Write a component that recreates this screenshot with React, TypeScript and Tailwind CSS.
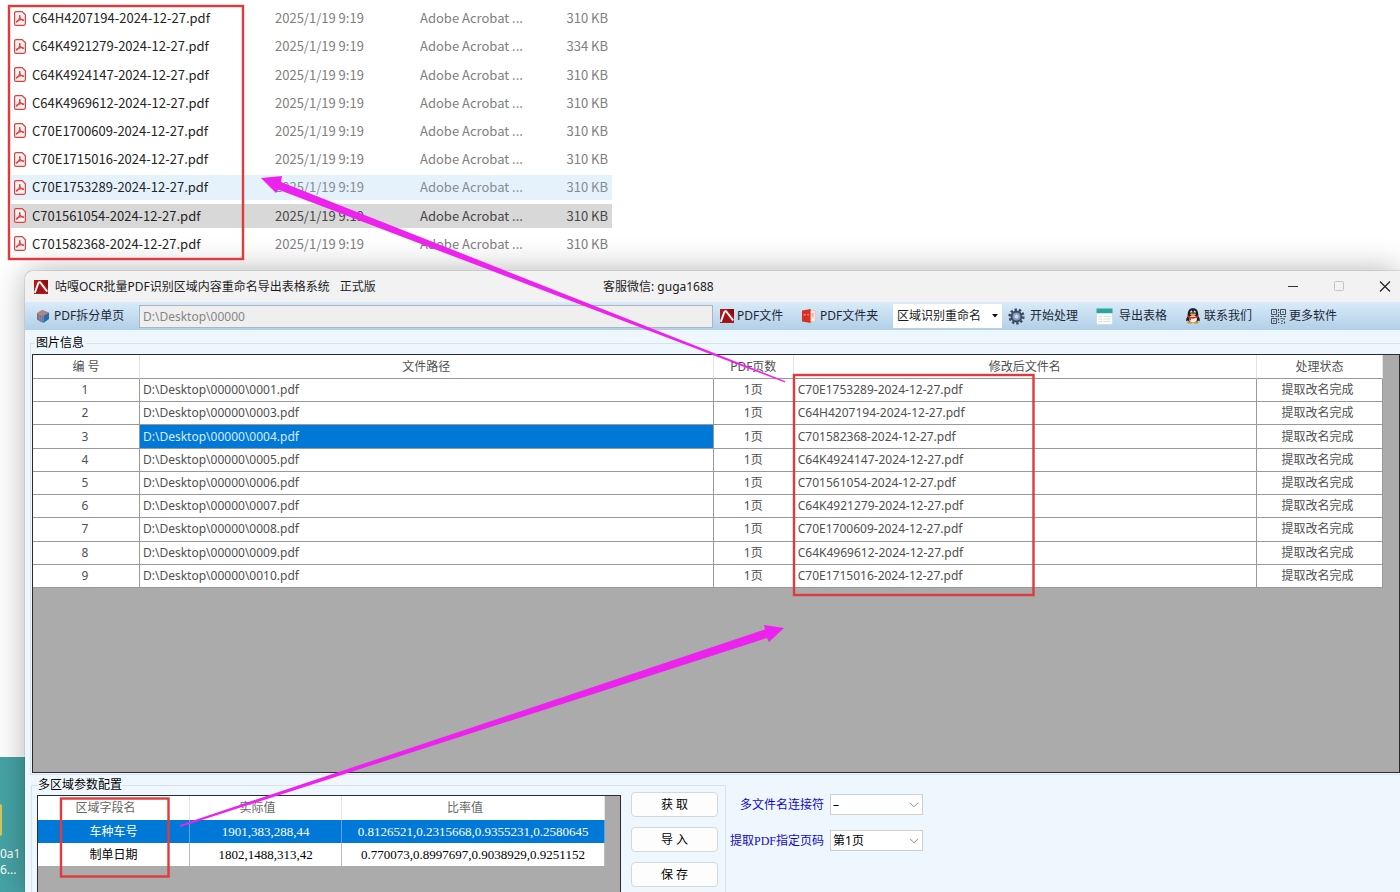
import type { ReactNode } from "react"

const files = [
    { name: "C64H4207194-2024-12-27.pdf", size: "310 KB" },
    { name: "C64K4921279-2024-12-27.pdf", size: "334 KB" },
    { name: "C64K4924147-2024-12-27.pdf", size: "310 KB" },
    { name: "C64K4969612-2024-12-27.pdf", size: "310 KB" },
    { name: "C70E1700609-2024-12-27.pdf", size: "310 KB" },
    { name: "C70E1715016-2024-12-27.pdf", size: "310 KB" },
    { name: "C70E1753289-2024-12-27.pdf", size: "310 KB", state: "hover" },
    { name: "C701561054-2024-12-27.pdf", size: "310 KB", state: "selected" },
    { name: "C701582368-2024-12-27.pdf", size: "310 KB" },
]

const results = [
    { path: "0001.pdf", renamed: "C70E1753289-2024-12-27.pdf" },
    { path: "0003.pdf", renamed: "C64H4207194-2024-12-27.pdf" },
    { path: "0004.pdf", renamed: "C701582368-2024-12-27.pdf", selected: true },
    { path: "0005.pdf", renamed: "C64K4924147-2024-12-27.pdf" },
    { path: "0006.pdf", renamed: "C701561054-2024-12-27.pdf" },
    { path: "0007.pdf", renamed: "C64K4921279-2024-12-27.pdf" },
    { path: "0008.pdf", renamed: "C70E1700609-2024-12-27.pdf" },
    { path: "0009.pdf", renamed: "C64K4969612-2024-12-27.pdf" },
    { path: "0010.pdf", renamed: "C70E1715016-2024-12-27.pdf" },
]

const regions = [
    { field: "车种车号", actual: "1901,383,288,44", ratio: "0.8126521,0.2315668,0.9355231,0.2580645", selected: true },
    { field: "制单日期", actual: "1802,1488,313,42", ratio: "0.770073,0.8997697,0.9038929,0.9251152" },
]

const PdfFileIcon = () => (
    <svg viewBox="0 0 12 15" className="h-[15px] w-3 shrink-0" fill="none" stroke="#dc4040">
        <path d="M2 .6h6.2l3.2 3.2v9a1.6 1.6 0 0 1-1.6 1.6H2A1.5 1.5 0 0 1 .6 12.9V2A1.4 1.4 0 0 1 2 .6Z" fill="#fdf3f3" strokeWidth="1.2" />
        <path d="M5.8 4.6c-1 0 .1 2.600 1.800 4.100 1.200 1 2.300.9 2 .3-.4-.8-4.200-.4-6.200.8-1.500.9-1.100 1.800-.2 1C4.700 9.700 6.800 4.700 5.800 4.600Z" strokeWidth="1.100" />
    </svg>
)

const AdobeIcon = () => (
    <svg viewBox="0 0 14 14" className="size-[14px] shrink-0">
        <path d="M0 0h14v14H0Z" fill="#b5161b" />
        <path d="M7 0h7v8Z" fill="#8c0c10" />
        <path d="M1.500 13 5.200 4.500 11.500 13Z" fill="#a01216" />
        <path d="M.8 12.800 4.300 3.200C4.700 2 6.200 2 6.700 3l6.500 8.500" fill="none" stroke="#fff" strokeWidth="1.900" />
    </svg>
)

const CubeIcon = () => (
    <svg viewBox="0 0 14 14" className="size-[14px] shrink-0">
        <path d="m1 4 5-3 7 2.500-5.500 3Z" fill="#c9786e" />
        <path d="m1 4 2.200.9V12L1 10.500Z" fill="#6b7686" />
        <path d="m3.200 4.900 2 .8v7.600L3.200 12Z" fill="#b5645c" />
        <path d="m5.200 5.700 2.300.8V14l-2.300-.9Z" fill="#4a86b8" />
        <path d="m7.500 6.500 5.500-3V10l-5.500 4Z" fill="#2c6ba5" />
        <path d="m3 3.800 5-2.300M5 4.700l5-2.300" stroke="#7a93ab" strokeWidth=".8" />
    </svg>
)

const FolderIcon = () => (
    <svg viewBox="0 0 14 14" className="size-[14px] shrink-0">
        <path d="M7 1.500h6.300v11H7Z" fill="#fbeeec" stroke="#e5b5af" strokeWidth=".6" />
        <path d="M9.800 4h1.500v3.500H9.800ZM9 9h3" fill="#e4b0aa" stroke="#e4b0aa" strokeWidth=".6" />
        <path d="M0 1.500 8.600 0v14L0 12.500Z" fill="#d9301f" />
        <path d="M1.500 5.800h2.500M5 5.800h2" stroke="#f3a79f" />
    </svg>
)

const GearIcon = () => (
    <svg viewBox="0 0 18 18" className="size-[17px] shrink-0">
        <circle cx="9" cy="9" r="7.200" fill="none" stroke="#3c4a60" strokeWidth="2.800" strokeDasharray="2.500 2.020" />
        <circle cx="9" cy="9" r="5.300" fill="#7f96b6" stroke="#3c4a60" strokeWidth="2" />
        <circle cx="9" cy="9" r="2.600" fill="#c8dcf0" stroke="#8ea6c4" />
    </svg>
)

const SheetIcon = () => (
    <svg viewBox="0 0 17 17" className="size-[17px] shrink-0">
        <path d="M.5.500h16v16H.5Z" fill="#fbfdfd" stroke="#c5d5dc" strokeWidth=".6" />
        <path d="M.5.500h16v4.800H.5Z" fill="#2aa79c" />
        <path d="M2.500 8.500h3.500M7.500 8.500h7M2.500 11h3.500M7.500 11h7M2.500 13.500h3.500M7.500 13.500h7" stroke="#c9d8e4" strokeWidth=".8" />
    </svg>
)

const PenguinIcon = () => (
    <svg viewBox="0 0 14 16" className="h-4 w-[14px] shrink-0">
        <path d="M1.600 8.500C-.2 10.500 0 12.800.6 13.200c.5.200 1-.6 1.300-1 .8 2.200 2.700 2.800 5.100 2.800s4.300-.6 5.100-2.800c.3.400.8 1.200 1.300 1 .6-.4.8-2.700-1-4.700C12.500 3 11 .3 7 .3S1.500 3 1.600 8.500Z" fill="#1d1c22" />
        <ellipse cx="7" cy="11" rx="3.900" ry="3.700" fill="#fff" />
        <ellipse cx="5.400" cy="4" rx="1" ry="1.500" fill="#fff" />
        <ellipse cx="8.600" cy="4" rx="1" ry="1.500" fill="#fff" />
        <circle cx="5.700" cy="4.200" r=".5" />
        <circle cx="8.300" cy="4.200" r=".5" />
        <ellipse cx="7" cy="6.400" rx="3" ry="1" fill="#f2a11b" />
        <path d="M2 7.600c3 1.700 7 1.700 10 0l.3 1.700c-3 1.500-5.500 1.500-7.300 1.300v2l-1.800-.3v-2.100l-1.500-.9Z" fill="#d92b22" />
        <ellipse cx="3.800" cy="14.700" rx="2.600" ry="1.100" fill="#e8901a" />
        <ellipse cx="10.200" cy="14.700" rx="2.600" ry="1.100" fill="#e8901a" />
    </svg>
)

const QrIcon = () => (
    <svg viewBox="0 0 15 15" className="size-[15px] shrink-0" fill="none" stroke="#46505b">
        <path d="M.5.500h5v5h-5ZM9.500.500h5v5h-5ZM.5 9.500h5v5h-5Z" />
        <path d="M2 3h2M11 3h2M2 12h2M7.500 0v2M7 3.500h1.500M7.500 5v3M0 7.500h3M4.500 7.500h2M9 7.500h2M12.500 7.500H15M7.500 9.500v2M7 13.500h1.500M9.500 9.500h2M13 9v2M10 12h2M10 14.500h1.500M13.500 12.500v2" strokeWidth="1.200" />
    </svg>
)

const Chevron = () => (
    <svg viewBox="0 0 10 6" className="pointer-events-none absolute right-1 top-2 h-1.5 w-2.5" fill="none" stroke="#8a8a8a">
        <path d="m1 .8 4 4 4-4" />
    </svg>
)

const ToolButton = ({ icon, children, className }: { icon: ReactNode; children: ReactNode; className: string }) => (
    <button type="button" className={`flex shrink-0 items-center whitespace-nowrap text-[#1c2733] ${className}`}>
        {icon}
        {children}
    </button>
)

const FileList = () => (
    <section className="h-[271px] pl-[11px] pt-0.5 font-['Noto_Sans_CJK_SC',sans-serif] text-[13px] leading-5">
        <table className="h-[258px] w-[601px] table-fixed border-separate border-spacing-x-0 border-spacing-y-1">
            <colgroup>
                <col className="w-[264px]" />
                <col className="w-[145px]" />
                <col className="w-[112px]" />
                <col />
            </colgroup>
            <tbody>
                {files.map((file) => (
                    <tr
                        key={file.name}
                        className={
                            file.state === "hover"
                                ? "bg-[#e5f2fc] text-[#858c92]"
                                : file.state === "selected"
                                  ? "bg-[#d8d8d8] text-[#484848]"
                                  : "text-[#808080]"
                        }
                    >
                        <td className="p-0 text-[#242424]">
                            <span className="flex items-center gap-1.5 pl-[3px]">
                                <PdfFileIcon />
                                {file.name}
                            </span>
                        </td>
                        <td className="p-0">2025/1/19 9:19</td>
                        <td className="whitespace-nowrap p-0">Adobe Acrobat ...</td>
                        <td className="p-0 pr-1 text-right">{file.size}</td>
                    </tr>
                ))}
            </tbody>
        </table>
    </section>
)

const TitleBar = () => (
    <header className="flex h-[31px] shrink-0 items-center bg-[#f2f2f3] pl-[9px] text-[#1c1c1c]">
        <AdobeIcon />
        <h1 className="ml-[7px] flex w-[548px] gap-2.5 whitespace-nowrap">
            <span>咕嘎OCR批量PDF识别区域内容重命名导出表格系统</span>
            <span>正式版</span>
        </h1>
        <span className="flex-1">客服微信: guga1688</span>
        <div className="flex">
            <button type="button" aria-label="最小化" className="flex w-[46px] justify-center">
                <svg viewBox="0 0 12 12" className="size-3" stroke="#333">
                    <path d="M1 5.500h10" />
                </svg>
            </button>
            <button type="button" aria-label="最大化" className="flex w-[46px] justify-center">
                <svg viewBox="0 0 12 12" className="size-3" fill="none" stroke="#c4c4c4">
                    <rect x="1.500" y=".500" width="9" height="9" rx="1" />
                </svg>
            </button>
            <button type="button" aria-label="关闭" className="flex w-[38px] justify-center pl-2">
                <svg viewBox="0 0 12 12" className="size-3" stroke="#222" strokeWidth="1.200">
                    <path d="m1 .5 10 10M11 .5 1 10.500" />
                </svg>
            </button>
        </div>
    </header>
)

const Toolbar = () => (
    <div className="flex h-7 shrink-0 items-center bg-linear-to-b from-[#d9ebf9] to-[#b1cfe8] pl-[11px] pr-[63px]">
        <ToolButton icon={<CubeIcon />} className="w-[103px] gap-1">PDF拆分单页</ToolButton>
        <input
            aria-label="文件夹路径"
            defaultValue="D:\Desktop\00000"
            className="h-[23px] min-w-0 flex-1 border border-[#abb6c0] bg-[#efefef] px-[3px] text-[#858585]"
        />
        <ToolButton icon={<AdobeIcon />} className="ml-[7px] w-[82px] gap-[3px]">PDF文件</ToolButton>
        <ToolButton icon={<FolderIcon />} className="w-[91px] gap-1">PDF文件夹</ToolButton>
        <div className="relative mr-1.5 w-[109px]">
            <select aria-label="处理方式" className="h-6 w-full appearance-none bg-white pl-1 text-[#1c1c1c]">
                <option>区域识别重命名</option>
            </select>
            <svg viewBox="0 0 6 4" className="pointer-events-none absolute right-1 top-2.5 h-1 w-1.5">
                <path d="M0 0h6L3 3.500Z" fill="#111" />
            </svg>
        </div>
        <ToolButton icon={<GearIcon />} className="w-[88px] gap-[5px]">开始处理</ToolButton>
        <ToolButton icon={<SheetIcon />} className="w-[90px] gap-1.5">导出表格</ToolButton>
        <ToolButton icon={<PenguinIcon />} className="w-[85px] gap-1">联系我们</ToolButton>
        <ToolButton icon={<QrIcon />} className="gap-[3px]">更多软件</ToolButton>
    </div>
)

const ResultGrid = () => (
    <div className="h-[419px] border border-[#2b2b2b] bg-[#ababab] pr-4">
        <table className="h-[233px] w-full table-fixed border-separate border-spacing-0 bg-white text-[#505050]">
            <colgroup>
                <col className="w-[107px]" />
                <col className="w-[42.5%]" />
                <col className="w-20" />
                <col />
                <col className="w-[126px]" />
            </colgroup>
            <thead>
                <tr className="h-6">
                    {["编 号", "文件路径", "PDF页数", "修改后文件名", "处理状态"].map((title) => (
                        <th key={title} className="border-b border-r border-b-[#999] border-r-[#e4e4e4] p-0 font-normal">
                            {title}
                        </th>
                    ))}
                </tr>
            </thead>
            <tbody>
                {results.map((row, i) => (
                    <tr key={row.path} className="h-[23px] *:border-b *:border-r *:border-[#999] *:p-0">
                        <td className="pr-0.5! text-center">{i + 1}</td>
                        <td className={row.selected ? "bg-[#0078d7] pl-[3px]! text-[#d8ecff]" : "pl-[3px]!"}>
                            {"D:\\Desktop\\00000\\" + row.path}
                        </td>
                        <td className="text-center">1页</td>
                        <td className="pl-1!">{row.renamed}</td>
                        <td className="pr-1! text-center">提取改名完成</td>
                    </tr>
                ))}
            </tbody>
        </table>
    </div>
)

const RegionGrid = () => (
    <div className="w-[584px] border border-b-0 border-[#2b2b2b] bg-[#ababab] pr-[15px]">
        <table className="w-full table-fixed border-separate border-spacing-0 bg-white font-['Liberation_Serif','Noto_Sans_CJK_SC',serif]">
            <colgroup>
                <col className="w-[152px]" />
                <col className="w-[152px]" />
                <col />
            </colgroup>
            <thead>
                <tr className="h-6">
                    {["区域字段名", "实际值", "比率值"].map((title) => (
                        <th key={title} className="border-r border-[#e4e4e4] p-0 pr-4 font-normal text-[#666]">
                            {title}
                        </th>
                    ))}
                </tr>
            </thead>
            <tbody>
                {regions.map((row) => (
                    <tr
                        key={row.field}
                        className={
                            row.selected
                                ? "h-[23px] bg-[#0078d7] text-center text-white *:border-r *:border-[#5ba4df] *:p-0"
                                : "h-[23px] text-center text-black *:border-r *:border-[#bbb] *:p-0"
                        }
                    >
                        <td>{row.field}</td>
                        <td className="text-[13px]">{row.actual}</td>
                        <td className="text-[13px]">{row.ratio}</td>
                    </tr>
                ))}
            </tbody>
        </table>
    </div>
)

const OptionSelect = ({ id, label, value }: { id: string; label: string; value: string }) => (
    <div className="flex items-center justify-end gap-1.5">
        <label htmlFor={id} className="font-['Liberation_Serif','Noto_Sans_CJK_SC',serif] text-[#1207d0]">{label}</label>
        <div className="relative w-[93px]">
            <select id={id} className="block h-[21px] w-full appearance-none border border-[#d0d0d0] bg-white pl-0.5 text-black">
                <option>{value}</option>
            </select>
            <Chevron />
        </div>
    </div>
)

// Red frames and arrows drawn over both windows
const Annotations = () => (
    <svg width="1400" height="892" className="pointer-events-none absolute left-0 top-0">
        <g fill="none" stroke="#e03a3c" strokeWidth="2.400">
            <rect x="9" y="6" width="234" height="253" />
            <rect x="794" y="375" width="239.500" height="220" />
            <rect x="61" y="798.500" width="107.500" height="78" />
        </g>
        <g fill="#ee22ee">
            <path d="M261 178 282 176 281 182 785 381 785 382.500 278 189.500 276 193Z" />
            <path d="M784 628 764 625 765 629.500 180 825 180 827 767 638 769 642Z" />
        </g>
    </svg>
)

export default function App() {
    return (
        <div className="relative flex h-screen flex-col overflow-hidden bg-white font-['Noto_Sans','Noto_Sans_CJK_SC',sans-serif] text-xs">
            <FileList />
            <div className="flex min-h-0 flex-1">
                <aside className="flex w-[25px] shrink-0 flex-col">
                    <div className="flex-1" />
                    <div className="flex h-[135px] flex-col justify-end bg-[#46a3a5] pb-3.5 leading-4 text-white">
                        <div className="mb-2.5 h-8 w-0.5 rounded-r bg-[#d9c65a]" />
                        <span>0a1</span>
                        <span>6...</span>
                    </div>
                </aside>
                <main className="flex min-w-0 flex-1 flex-col overflow-hidden rounded-tl-lg bg-[#eff7fe] shadow-[0_0_32px_rgba(0,0,0,0.3),0_0_1px_rgba(0,0,0,0.8)]">
                    <TitleBar />
                    <Toolbar />
                    <fieldset className="ml-[5px] mt-[5px] min-w-0 border border-r-0 border-[#d8e2ea] pb-px pl-px">
                        <legend className="ml-0.5 px-0.5 leading-4 text-black">图片信息</legend>
                        <div className="pt-[3px]">
                            <ResultGrid />
                        </div>
                    </fieldset>
                    <div className="flex min-h-0 flex-1 pl-1.5 pt-[3px]">
                        <fieldset className="flex w-[695px] shrink-0 border border-b-0 border-[#d8e2ea] pl-[5px]">
                            <legend className="ml-px leading-[14px] text-black">多区域参数配置</legend>
                            <div className="flex h-full gap-2.5">
                                <div className="flex pt-[3px]">
                                    <RegionGrid />
                                </div>
                                <div className="flex flex-col gap-2.5">
                                    {["获 取", "导 入", "保 存"].map((text) => (
                                        <button
                                            key={text}
                                            type="button"
                                            className="h-[25px] w-[87px] shrink-0 rounded border border-[#d3d8dc] bg-[#fdfdfd] text-black"
                                        >
                                            {text}
                                        </button>
                                    ))}
                                </div>
                            </div>
                        </fieldset>
                        <div className="flex flex-col gap-[15px] pl-1 pt-4">
                            <OptionSelect id="joiner" label="多文件名连接符" value="–" />
                            <OptionSelect id="page" label="提取PDF指定页码" value="第1页" />
                        </div>
                    </div>
                </main>
            </div>
            <Annotations />
        </div>
    )
}
